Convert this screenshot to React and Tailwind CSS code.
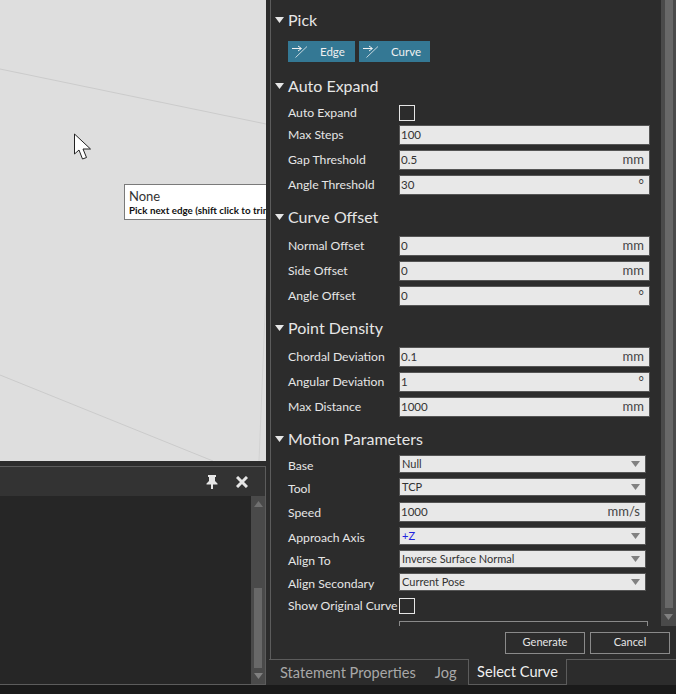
import React from "react";

const Heading = ({ title, className }) => (
  <div className={"flex items-center h-[24px] pl-[4px] " + className}>
    <svg width="9" height="6" viewBox="0 0 9 6" className="mr-[4px]">
      <path d="M0 0H9L4.5 6Z" fill="#e6e6e6" />
    </svg>
    <span className="text-[16px] text-[#e6e6e6]">{title}</span>
  </div>
);

const Field = ({ label, value, unit, className }) => (
  <div className={"flex items-center h-[20px] pl-[17px] " + className}>
    <span className="w-[111px] text-[12.2px] text-[#e6e6e6] whitespace-nowrap">{label}</span>
    <div className="flex items-center justify-between w-[251px] h-[20px] bg-[#e8e8e8] border border-[#555] pl-[1px] pr-[2px] text-[#333]">
      <span className="text-[11.5px]">{value}</span>
      <span className="pr-[3px] text-[13px] text-[#444]">{unit}</span>
    </div>
  </div>
);

const Select = ({ label, value, blue, className }) => (
  <div className={"flex items-center h-[18px] pl-[17px] " + className}>
    <span className="w-[111px] pt-[5px] text-[12.2px] text-[#e6e6e6] whitespace-nowrap">{label}</span>
    <div className="flex items-center justify-between w-[247px] h-[18px] bg-[#e8e8e8] border border-[#555] px-[2px] text-[11px] text-[#333]">
      <span className={"pt-[1px] " + (blue ? "text-[#2222dd]" : "")}>{value}</span>
      <svg width="9" height="6" viewBox="0 0 9 6" className="mr-[3px]">
        <path d="M0 0H9L4.5 6Z" fill="#808080" />
      </svg>
    </div>
  </div>
);

const CheckRow = ({ label, className }) => (
  <div className={"flex items-center h-[17px] pl-[17px] " + className}>
    <span className="w-[111px] pt-[1px] text-[12.2px] text-[#e6e6e6] whitespace-nowrap">{label}</span>
    <div className="w-[16px] h-[16px] border border-[#e6e6e6]" />
  </div>
);

const PickButton = ({ label, className }) => (
  <div className={"flex items-center h-[21px] bg-[#347894] pl-[4px] text-[11.5px] text-[#f0f0f0] " + className}>
    <svg width="16" height="13" viewBox="0 0 16 13" className="mr-[12px]" fill="none" stroke="#f0f0f0">
      <path d="M0 3.5H9M6 1L9.5 3.5L6 6" />
      <path d="M3.5 12.5L15 1.5" stroke="#c4d6de" />
    </svg>
    {label}
  </div>
);

const Scrollbar = () => (
  <div className="flex flex-col items-center justify-between w-[15px] bg-[#4a4a4a]">
    <div className="w-[8px] flex-1 bg-[#686868]" />
    <svg width="9" height="6" viewBox="0 0 9 6" className="my-[6px]">
      <path d="M0 0H9L4.5 6Z" fill="#808080" />
    </svg>
  </div>
);

export default function App() {
  return (
    <div
      className="flex flex-col w-[676px] h-[694px] overflow-hidden bg-[#2c2c2c]"
      style={{ fontFamily: 'Lato, "Noto Sans", sans-serif' }}
    >
      <div className="flex h-[685px]">
        {/* left side: viewport and docked panel */}
        <div className="flex flex-col w-[266px]">
          <div className="relative h-[461px] bg-[#dedede] overflow-hidden">
            <svg width="266" height="461" className="block">
              <path d="M0 69L266 124" stroke="#cbcbcb" fill="none" />
              <path d="M0 375L213 461" stroke="#cbcbcb" fill="none" />
              <path d="M266 290L259 461" stroke="#d2d2d2" fill="none" />
            </svg>
            <svg width="20" height="30" viewBox="0 0 20 30" className="absolute left-[73px] top-[133px]">
              <path d="M1.5 1V21L6 17L9.5 26L13.5 24.5L10 16H17.5Z" fill="#fff" stroke="#222" />
            </svg>
            <div className="absolute left-[124px] top-[184px] w-[160px] h-[36px] bg-white border border-[#7a7a7a] pl-[4px] whitespace-nowrap overflow-hidden">
              <div className="text-[13px] leading-[16px] mt-[3px] text-[#333]">None</div>
              <div className="text-[9.8px] leading-[12px] font-bold text-[#111]">Pick next edge (shift click to trim)</div>
            </div>
          </div>
          <div className="h-[5px] bg-[#2c2c2c]" />
          <div className="flex flex-col h-[219px] border-t border-r border-b border-[#5c5c5c]">
            <div className="flex items-center justify-end h-[29px] bg-[#333] pr-[17px] gap-[18px]">
              <svg width="12" height="14" viewBox="0 0 12 14" fill="#e6e6e6">
                <path d="M2 0H10V2H9V6L11.5 8.5V9.5H7V14H5V9.5H.5V8.5L3 6V2H2Z" />
              </svg>
              <svg width="12" height="12" viewBox="0 0 12 12" stroke="#e6e6e6" strokeWidth="3">
                <path d="M1 1L11 11M11 1L1 11" />
              </svg>
            </div>
            <div className="flex flex-1 justify-end bg-[#262626]">
              <div className="flex flex-col items-center w-[14px] bg-[#4a4a4a]">
                <svg width="9" height="6" viewBox="0 0 9 6" className="my-[5px]">
                  <path d="M0 6H9L4.5 0Z" fill="#707070" />
                </svg>
                <div className="flex-1" />
                <div className="w-[8px] h-[80px] bg-[#686868]" />
                <svg width="9" height="6" viewBox="0 0 9 6" className="my-[5px]">
                  <path d="M0 0H9L4.5 6Z" fill="#808080" />
                </svg>
              </div>
            </div>
          </div>
        </div>

        <div className="w-[4px]" />

        {/* right side: property panel */}
        <div className="flex flex-col flex-1">
          <div className="flex flex-col h-[659px] border-l border-[#5c5c5c]">
            <div className="flex h-[626px]">
              <div className="w-[390px] overflow-hidden pt-[8px]">
                <Heading title="Pick" />
                <div className="flex gap-[4px] pl-[17px] mt-[9px]">
                  <PickButton label="Edge" className="w-[67px]" />
                  <PickButton label="Curve" className="w-[71px]" />
                </div>
                <Heading title="Auto Expand" className="mt-[12px]" />
                <CheckRow label="Auto Expand" className="mt-[6px]" />
                <Field label="Max Steps" value="100" className="mt-[4px]" />
                <Field label="Gap Threshold" value="0.5" unit="mm" className="mt-[5px]" />
                <Field label="Angle Threshold" value="30" unit="°" className="mt-[5px]" />
                <Heading title="Curve Offset" className="mt-[10px]" />
                <Field label="Normal Offset" value="0" unit="mm" className="mt-[7px]" />
                <Field label="Side Offset" value="0" unit="mm" className="mt-[5px]" />
                <Field label="Angle Offset" value="0" unit="°" className="mt-[5px]" />
                <Heading title="Point Density" className="mt-[10px]" />
                <Field label="Chordal Deviation" value="0.1" unit="mm" className="mt-[7px]" />
                <Field label="Angular Deviation" value="1" unit="°" className="mt-[5px]" />
                <Field label="Max Distance" value="1000" unit="mm" className="mt-[5px]" />
                <Heading title="Motion Parameters" className="mt-[10px]" />
                <Select label="Base" value="Null" className="mt-[4px]" />
                <Select label="Tool" value="TCP" className="mt-[5px]" />
                <div className="flex items-center h-[20px] pl-[17px] mt-[6px]">
                  <span className="w-[111px] pt-[3px] text-[12.2px] text-[#e6e6e6]">Speed</span>
                  <div className="flex items-center justify-between w-[247px] h-[20px] bg-[#e8e8e8] border border-[#555] pl-[1px] pr-[2px] text-[#333]">
                    <span className="text-[11.5px]">1000</span>
                    <span className="pr-[3px] text-[13px] text-[#444]">mm/s</span>
                  </div>
                </div>
                <Select label="Approach Axis" value="+Z" blue className="mt-[5px]" />
                <Select label="Align To" value="Inverse Surface Normal" className="mt-[5px]" />
                <Select label="Align Secondary" value="Current Pose" className="mt-[5px]" />
                <CheckRow label="Show Original Curve" className="mt-[6px]" />
                <div className="ml-[128px] mt-[7px] w-[249px] h-[20px] border border-[#8a8a8a]" />
              </div>
              <Scrollbar />
            </div>
            <div className="flex flex-1 justify-end items-center gap-[5px] pr-[6px]">
              <div className="flex items-center justify-center w-[80px] h-[22px] border border-[#8a8a8a] text-[11px] text-[#e6e6e6]">Generate</div>
              <div className="flex items-center justify-center w-[80px] h-[22px] border border-[#8a8a8a] text-[11px] text-[#e6e6e6]">Cancel</div>
            </div>
          </div>
          <div className="flex h-[26px] -ml-[1px]">
            <div className="flex items-center w-[199px] pl-[11px] gap-[19px] border-t border-[#5c5c5c] text-[14.6px] text-[#a8a8a8] whitespace-nowrap">
              <span>Statement Properties</span>
              <span>Jog</span>
            </div>
            <div className="flex items-center justify-center w-[99px] border-l border-r border-b border-[#5c5c5c] text-[14.6px] text-[#f0f0f0]">Select Curve</div>
            <div className="flex-1 border-t border-[#5c5c5c]" />
          </div>
        </div>
      </div>
      <div className="flex-1 bg-[#1a1a1a]" />
    </div>
  );
}
